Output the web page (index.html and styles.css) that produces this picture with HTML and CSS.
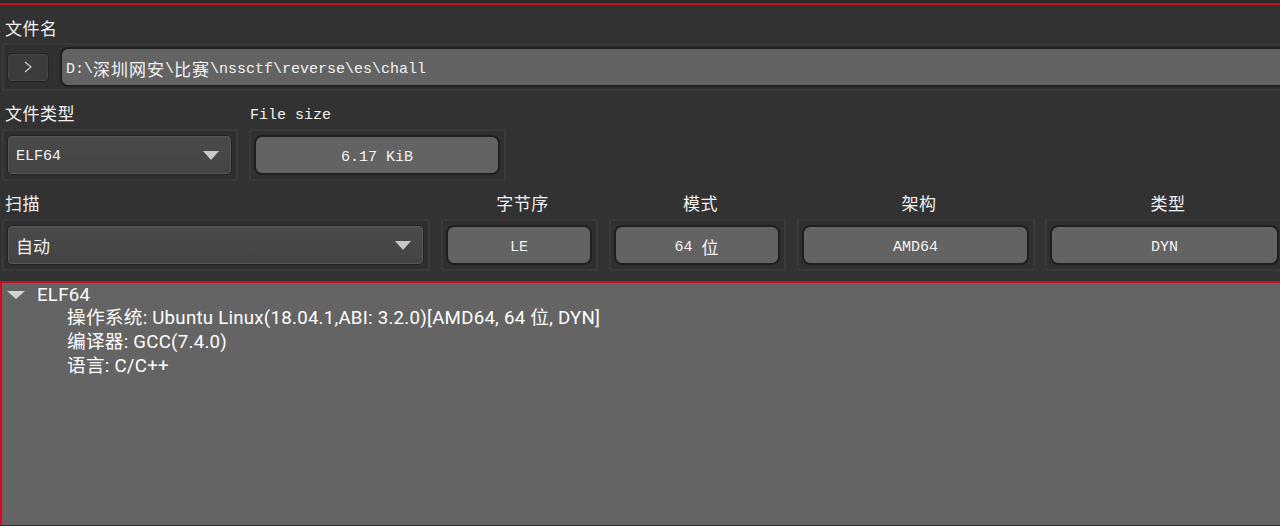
FILE: index.html
```html
<!DOCTYPE html>
<html lang="zh">
<head>
<meta charset="utf-8">
<title>Detect It Easy</title>
<link rel="stylesheet" href="styles.css">
</head>
<body>
<div class="topbar"></div>
<div class="app">
  <div class="label label-first">文件名</div>
  <div class="frame frame-path">
    <button class="btn-go" type="button">
      <svg width="8" height="12" viewBox="0 0 8 12"><polyline points="1,1 7,6 1,11" fill="none" stroke="#cfcfcf" stroke-width="1.2"/></svg>
    </button>
    <div class="field field-path">D:\<span class="cjk">深圳网安</span>\<span class="cjk">比赛</span>\nssctf\reverse\es\chall</div>
  </div>

  <div class="row">
    <div class="group g-type">
      <div class="label">文件类型</div>
      <div class="frame">
        <div class="combo"><span class="mono">ELF64</span><span class="arrow"></span></div>
      </div>
    </div>
    <div class="group g-size">
      <div class="label mono-label">File size</div>
      <div class="frame">
        <div class="field">6.17 KiB</div>
      </div>
    </div>
  </div>

  <div class="row">
    <div class="group g-scan">
      <div class="label">扫描</div>
      <div class="frame">
        <div class="combo"><span class="cjk-plain">自动</span><span class="arrow"></span></div>
      </div>
    </div>
    <div class="group g-endian">
      <div class="label center">字节序</div>
      <div class="frame">
        <div class="field">LE</div>
      </div>
    </div>
    <div class="group g-mode">
      <div class="label center">模式</div>
      <div class="frame">
        <div class="field">64 <span class="cjk">位</span></div>
      </div>
    </div>
    <div class="group g-arch">
      <div class="label center">架构</div>
      <div class="frame">
        <div class="field">AMD64</div>
      </div>
    </div>
    <div class="group g-kind">
      <div class="label center">类型</div>
      <div class="frame">
        <div class="field">DYN</div>
      </div>
    </div>
  </div>
</div>

<div class="tree">
  <div class="node"><span class="tri"></span>ELF64</div>
  <div class="child">操作系统: Ubuntu Linux(18.04.1,ABI: 3.2.0)[AMD64, 64 位, DYN]</div>
  <div class="child">编译器: GCC(7.4.0)</div>
  <div class="child">语言: C/C++</div>
</div>
</body>
</html>
```
FILE: styles.css
```css
html {
  overflow: hidden;
  background: #323232;
}

body {
  margin: 0;
  width: 1292px;
  height: 526px;
  overflow: hidden;
  background: #323232;
  color: #f2f2f2;
  font-family: "Noto Sans CJK SC", sans-serif;
}

.topbar {
  height: 3px;
  background: #2a2a2a;
  border-bottom: 2px solid #c8101e;
}

.app {
  padding-left: 2px;
}

.label {
  height: 24px;
  line-height: 24px;
  font-size: 17px;
  letter-spacing: 0.5px;
  padding-left: 3px;
  margin-top: 10px;
  margin-bottom: 4px;
  white-space: nowrap;
}

.label-first {
  margin-top: 11px;
  margin-bottom: 3px;
}

.row:first-of-type .label {
  margin-top: 11px;
}

.label.center {
  text-align: center;
  padding-left: 6px;
}

.mono-label {
  font-family: "Liberation Mono", monospace;
  font-size: 15px;
  letter-spacing: 0;
  padding-left: 1px;
  box-sizing: border-box;
  padding-top: 3px;
}

.frame {
  box-sizing: border-box;
  height: 52px;
  border: 2px solid #3a3a3a;
  background: #303030;
  padding: 4px 4px 4px 3px;
}

.frame-path {
  height: 48px;
  padding: 2px 0 2px 3px;
  display: flex;
  align-items: center;
  gap: 11px;
}

.btn-go {
  flex: none;
  box-sizing: border-box;
  width: 42px;
  height: 29px;
  padding: 0;
  border: 1px solid #242424;
  border-radius: 4px;
  background: #3c3c3c;
  box-shadow: inset 0 0 0 1px #454545;
  display: flex;
  align-items: center;
  justify-content: center;
}

.field {
  box-sizing: border-box;
  height: 40px;
  border: 2px solid #1f1f1f;
  border-radius: 8px;
  background: #636363;
  display: flex;
  align-items: center;
  justify-content: center;
  padding-top: 4px;
  font-family: "Liberation Mono", monospace;
  font-size: 15px;
  color: #f4f4f4;
  white-space: pre;
}

.field-path {
  flex: 1;
  justify-content: flex-start;
  padding-left: 4px;
}

.cjk {
  font-family: "Noto Sans CJK SC", sans-serif;
  font-size: 17px;
  letter-spacing: 1px;
  position: relative;
  top: -1px;
}

.cjk-plain {
  font-family: "Noto Sans CJK SC", sans-serif;
  font-size: 17px;
}

.mono {
  font-family: "Liberation Mono", monospace;
  font-size: 15px;
  padding-top: 3px;
}

.combo {
  box-sizing: border-box;
  height: 40px;
  border: 1px solid #222222;
  border-radius: 5px;
  background: linear-gradient(#4a4a4a, #444444);
  box-shadow: inset 0 0 0 1px #585858;
  display: flex;
  align-items: center;
  justify-content: space-between;
  padding: 0 12px 0 8px;
  color: #f4f4f4;
}

.arrow {
  width: 0;
  height: 0;
  border-left: 8px solid transparent;
  border-right: 8px solid transparent;
  border-top: 9px solid #c8c8c8;
}

.row {
  display: flex;
  gap: 11px;
}

.g-type { width: 236px; }
.g-size { width: 257px; }
.g-scan { width: 428px; }
.g-endian { width: 157px; }
.g-mode { width: 177px; }
.g-arch { width: 238px; }
.g-kind { width: 240px; margin-left: -1px; }

.tree {
  box-sizing: border-box;
  margin-top: 10px;
  height: 244px;
  padding-top: 1px;
  border-top: 2px solid #c8101e;
  border-left: 2px solid #c8101e;
  background: #646464;
  color: #ffffff;
  font-family: Roboto, "Noto Sans CJK SC", sans-serif;
  font-size: 18.67px;
  letter-spacing: 0.25px;
}

.node {
  height: 22px;
  display: flex;
  align-items: center;
  padding-left: 5px;
}

.tri {
  width: 0;
  height: 0;
  border-left: 9px solid transparent;
  border-right: 9px solid transparent;
  border-top: 8px solid #d4d4d4;
  margin-right: 12px;
}

.child {
  height: 24px;
  line-height: 24px;
  padding-left: 65px;
  white-space: nowrap;
}
```
